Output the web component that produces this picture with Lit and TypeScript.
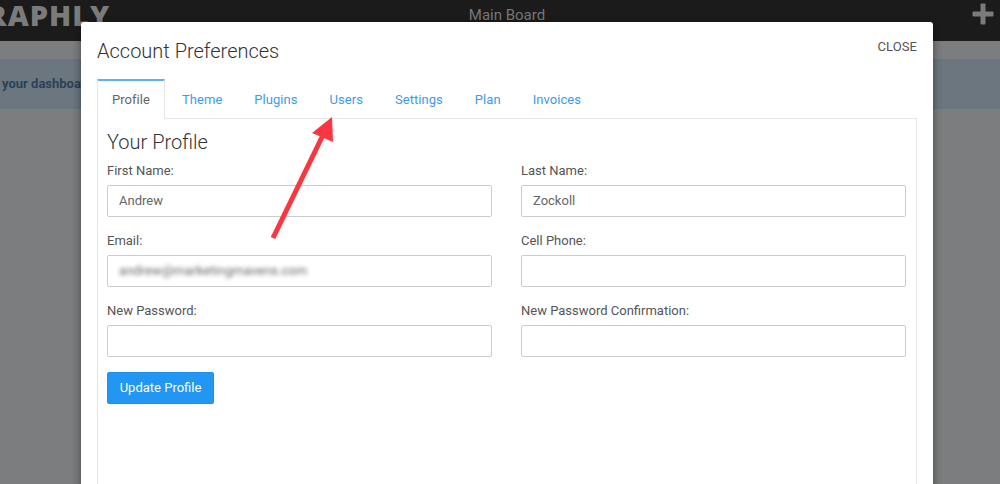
import { LitElement, html, css } from "lit";
import { customElement } from "lit/decorators.js";

@customElement("app-root")
export class AppRoot extends LitElement {
  static styles = css`
    :host { display: block; position: relative; width: 1000px; height: 484px; overflow: hidden; background: #7c7d7e; font-family: Roboto, "Liberation Sans", sans-serif; color: #555; }
    * { box-sizing: border-box; }
    .topbar { height: 41px; background: #1a1b1a; display: grid; grid-template-columns: 1fr auto 1fr; align-items: center; overflow: hidden; }
    .logo { font: 800 29px/41px "Open Sans", sans-serif; letter-spacing: 1px; color: #7b7b7b; margin: -12px 0 0 -13px; white-space: nowrap; }
    .board { font-size: 15px; line-height: 18px; color: #777; margin: -12px 0 0 14px; }
    .plus { justify-self: end; margin: -14px 6px 0 0; width: 22px; height: 22px; display: block; }
    .banner { margin-top: 18px; height: 50px; background: #6b767e; border-top: 1px solid #65797f; border-bottom: 1px solid #65797f; padding-left: 2px; font-size: 13px; line-height: 48px; font-weight: 700; color: #2a4258; }
    .modal { position: absolute; left: 81px; top: 22px; width: 852px; height: 500px; background: #fff; border-radius: 3px; box-shadow: 0 3px 10px rgba(0,0,0,.45); padding: 16px 16px 0; }
    .head { display: flex; justify-content: space-between; height: 41px; }
    h1 { margin: 0; font-size: 20px; font-weight: 300; line-height: 26px; color: #333; }
    .close { font-size: 13px; line-height: 18px; color: #555; margin-left: -1px; letter-spacing: 0.1px; }
    .tabs { display: flex; height: 40px; gap: 2px; position: relative; margin-bottom: -1px; }
    .tab { padding: 0 14px; font-size: 13px; line-height: 40px; letter-spacing: 0.05px; color: #3d9bef; border: 1px solid transparent; }
    .tab.active { color: #666; background: #fff; border-color: #e6e6e6; border-top: 1px solid #5fb2f6; box-shadow: inset 0 1px 0 #5fb2f6; border-bottom-color: #fff; position: relative; z-index: 1; }
    .panel { border: 1px solid #e6e6e6; padding: 10px 10px 0 9px; height: 400px; }
    h2 { margin: 0; font-size: 20px; font-weight: 300; line-height: 26px; color: #333; }
    .grid { display: grid; grid-template-columns: 385px 385px; column-gap: 29px; margin-top: 7px; row-gap: 15px; }
    label { display: block; font-size: 13px; line-height: 17px; height: 17px; color: #555; margin-bottom: 6px; }
    input { display: block; width: 100%; height: 32px; border: 1px solid #ccc; border-radius: 2px; padding: 0 11px 2px; font: 13px Roboto, sans-serif; color: #666; background: #fff; outline: none; }
    input.blur { filter: blur(2px); color: #666; letter-spacing: 0.06px; }
    .wrap { position: relative; height: 32px; border: 1px solid #ccc; border-radius: 2px; overflow: hidden; }
    .wrap input { border: 0; height: 30px; padding: 0 11px 2px; }
    .btn { display: block; margin-top: 15px; width: 107px; height: 32px; background: #2196f3; color: #fff; border: 1px solid #1f8fe8; border-radius: 2px; font: 13px Roboto, sans-serif; padding: 0 0 2px; }
    .arrow { position: absolute; left: 260px; top: 110px; width: 90px; height: 140px; pointer-events: none; }
  `;

  private field(label: string, value = "", blur = false) {
    return html`<div>
      <label>${label}</label>
      ${blur
        ? html`<div class="wrap"><input class="blur" .value=${value} /></div>`
        : html`<input .value=${value} />`}
    </div>`;
  }

  render() {
    const tabs = ["Theme", "Plugins", "Users", "Settings", "Plan", "Invoices"];
    return html`
      <div class="topbar">
        <div class="logo">RAPHLY</div>
        <div class="board">Main Board</div>
        <svg class="plus" viewBox="0 0 22 22"><path d="M8.5 1.5a1 1 0 0 1 1-1h3a1 1 0 0 1 1 1v7h7a1 1 0 0 1 1 1v3a1 1 0 0 1-1 1h-7v7a1 1 0 0 1-1 1h-3a1 1 0 0 1-1-1v-7h-7a1 1 0 0 1-1-1v-3a1 1 0 0 1 1-1h7z" fill="#7b7b7b"/></svg>
      </div>
      <div class="banner">your dashboard</div>
      <div class="modal">
        <div class="head">
          <h1>Account Preferences</h1>
          <div class="close">CLOSE</div>
        </div>
        <div class="tabs">
          <div class="tab active">Profile</div>
          ${tabs.map((t) => html`<div class="tab">${t}</div>`)}
        </div>
        <div class="panel">
          <h2>Your Profile</h2>
          <div class="grid">
            ${this.field("First Name:", "Andrew")}
            ${this.field("Last Name:", "Zockoll")}
            ${this.field("Email:", "andrew@marketingmavens.com", true)}
            ${this.field("Cell Phone:")}
            ${this.field("New Password:")}
            ${this.field("New Password Confirmation:")}
          </div>
          <button class="btn">Update Profile</button>
        </div>
      </div>
      <svg class="arrow" viewBox="260 110 90 140">
        <path d="M273 238 L323 135" stroke="#fb3640" stroke-width="5" fill="none"/>
        <path d="M332 117 L312 133 L333 142 Z" fill="#fb3640"/>
      </svg>
    `;
  }
}
